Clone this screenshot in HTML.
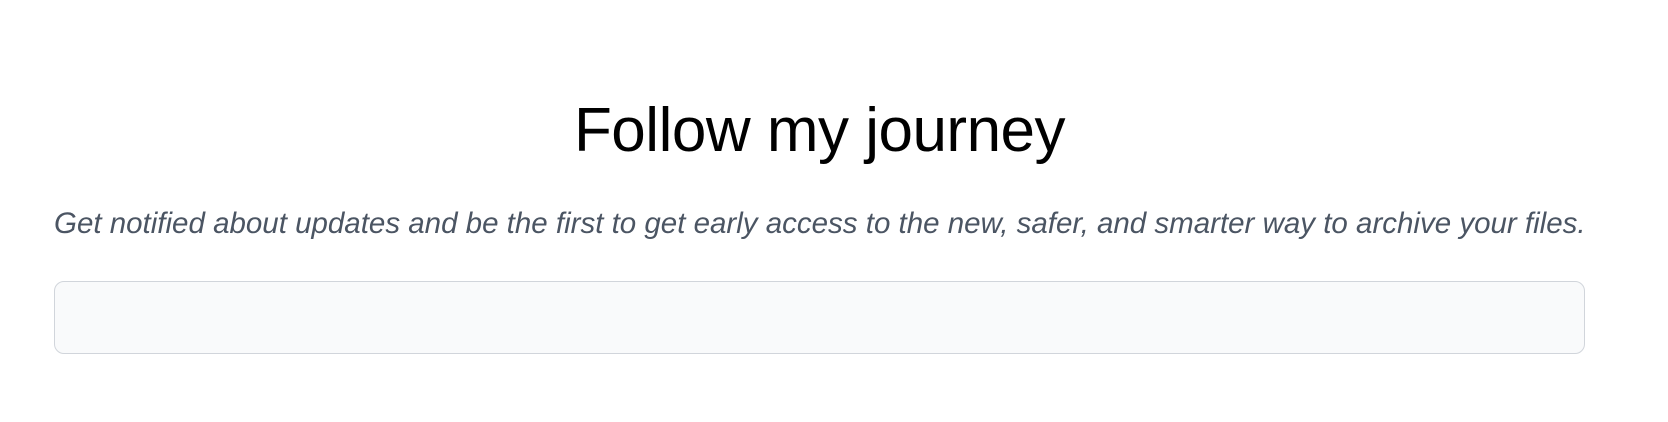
<!DOCTYPE html>
<html><head><style>
html,body{margin:0;padding:0;background:#fff;width:1668px;height:422px;overflow:hidden;font-family:"Liberation Sans",Arial,sans-serif}
.wrap{position:absolute;left:54px;width:1531px;top:0}
h1{position:absolute;left:0;width:1531px;top:95px;margin:0;text-align:center;font-weight:400;font-size:62px;line-height:72px;color:#000;letter-spacing:-0.5px}
p{position:absolute;left:0;width:1531px;top:207px;margin:0;text-align:center;font-style:italic;font-size:29.5px;line-height:34px;color:#4b5563;white-space:nowrap}
.box{position:absolute;left:54px;top:281px;width:1529px;height:71px;border:1px solid #d1d5db;border-radius:10px;background:#f9fafb}
</style></head><body>
<div class="wrap">
<h1>Follow my journey</h1>
<p>Get notified about updates and be the first to get early access to the new, safer, and smarter way to archive your files.</p>
</div>
<div class="box"></div>
</body></html>
